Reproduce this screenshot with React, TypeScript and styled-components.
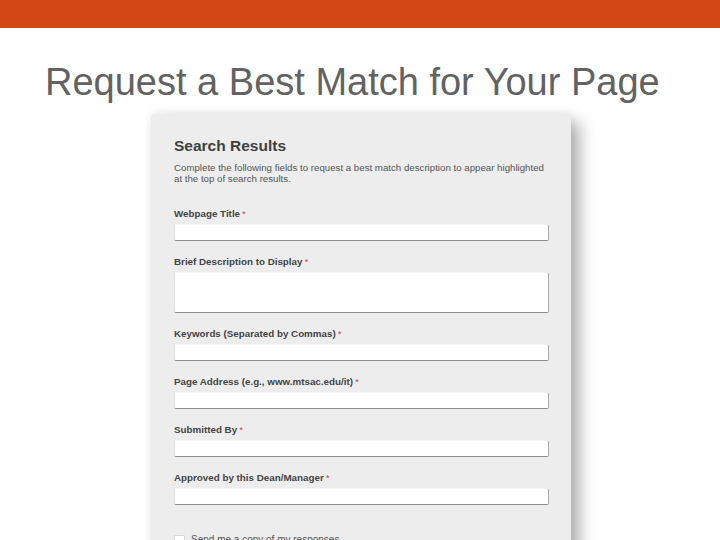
import React from "react";
import styled, { createGlobalStyle } from "styled-components";

const Global = createGlobalStyle`
  html, body { margin: 0; padding: 0; background: #fff; }
  body { width: 720px; height: 540px; overflow: hidden; font-family: "Liberation Sans", Arial, sans-serif; }
`;

const Slide = styled.div`
  width: 720px;
  height: 540px;
  display: flex;
  flex-direction: column;
  overflow: hidden;
`;

const TopBar = styled.div`
  height: 28px;
  background: #d34817;
  flex: none;
`;

const Title = styled.h1`
  margin: 31px 0 0 45px;
  font-family: "Liberation Sans", Arial, sans-serif;
  font-weight: 400;
  font-size: 38px;
  line-height: 46px;
  color: #626262;
  white-space: nowrap;
`;

const CardWrap = styled.div`
  display: flex;
  padding-left: 151px;
  margin-top: 9px;
`;

const Card = styled.div`
  width: 420px;
  height: 460px;
  background: #ededed;
  border-radius: 3px;
  box-shadow: 9px 8px 16px rgba(0, 0, 0, 0.3), 0 -2px 8px rgba(0, 0, 0, 0.06);
  padding: 23px 22px 0 23px;
  box-sizing: border-box;
  display: flex;
  flex-direction: column;
`;

const Heading = styled.h2`
  margin: 0;
  font-size: 15.5px;
  line-height: 18px;
  font-weight: 700;
  color: #3f3f3f;
`;

const Intro = styled.p`
  margin: 7px 0 0 0;
  font-size: 9.7px;
  line-height: 11px;
  color: #555;
`;

const Field = styled.div<{ $first?: boolean }>`
  display: flex;
  flex-direction: column;
  margin-top: ${(p) => (p.$first ? "24px" : "15px")};
`;

const Label = styled.label`
  font-size: 9.8px;
  line-height: 12px;
  font-weight: 700;
  color: #444;
  margin-bottom: 4px;
`;

const Req = styled.span`
  color: #d0404a;
  font-weight: 400;
  margin-left: 2px;
`;

const Input = styled.div<{ $tall?: boolean }>`
  height: ${(p) => (p.$tall ? "41px" : "17px")};
  background: #fff;
  border-radius: 2px;
  box-sizing: border-box;
  border-bottom: 1px solid #8d8d8d;
  border-right: 1px solid #a8a8a8;
  border-left: 1px solid #e2e2e2;
  border-top: 1px solid #f4f4f4;
  width: 375px;
`;

const CheckRow = styled.div`
  display: flex;
  align-items: center;
  gap: 6px;
  margin-top: 29px;
`;

const Box = styled.div`
  width: 9px;
  height: 9px;
  background: #fff;
  border: 1px solid #d8d8d8;
  border-radius: 1px;
`;

const CheckText = styled.span`
  font-size: 10px;
  line-height: 12px;
  color: #555;
`;

const fields: { label: string; tall?: boolean }[] = [
  { label: "Webpage Title" },
  { label: "Brief Description to Display", tall: true },
  { label: "Keywords (Separated by Commas)" },
  { label: "Page Address (e.g., www.mtsac.edu/it)" },
  { label: "Submitted By" },
  { label: "Approved by this Dean/Manager" },
];

export default function App() {
  return (
    <Slide>
      <Global />
      <TopBar />
      <Title>Request a Best Match for Your Page</Title>
      <CardWrap>
        <Card>
          <Heading>Search Results</Heading>
          <Intro>
            Complete the following fields to request a best match description to appear highlighted at the top of search results.
          </Intro>
          {fields.map((f, i) => (
            <Field key={f.label} $first={i === 0}>
              <Label>
                {f.label}
                <Req>*</Req>
              </Label>
              <Input $tall={f.tall} />
            </Field>
          ))}
          <CheckRow>
            <Box />
            <CheckText>Send me a copy of my responses</CheckText>
          </CheckRow>
        </Card>
      </CardWrap>
    </Slide>
  );
}
